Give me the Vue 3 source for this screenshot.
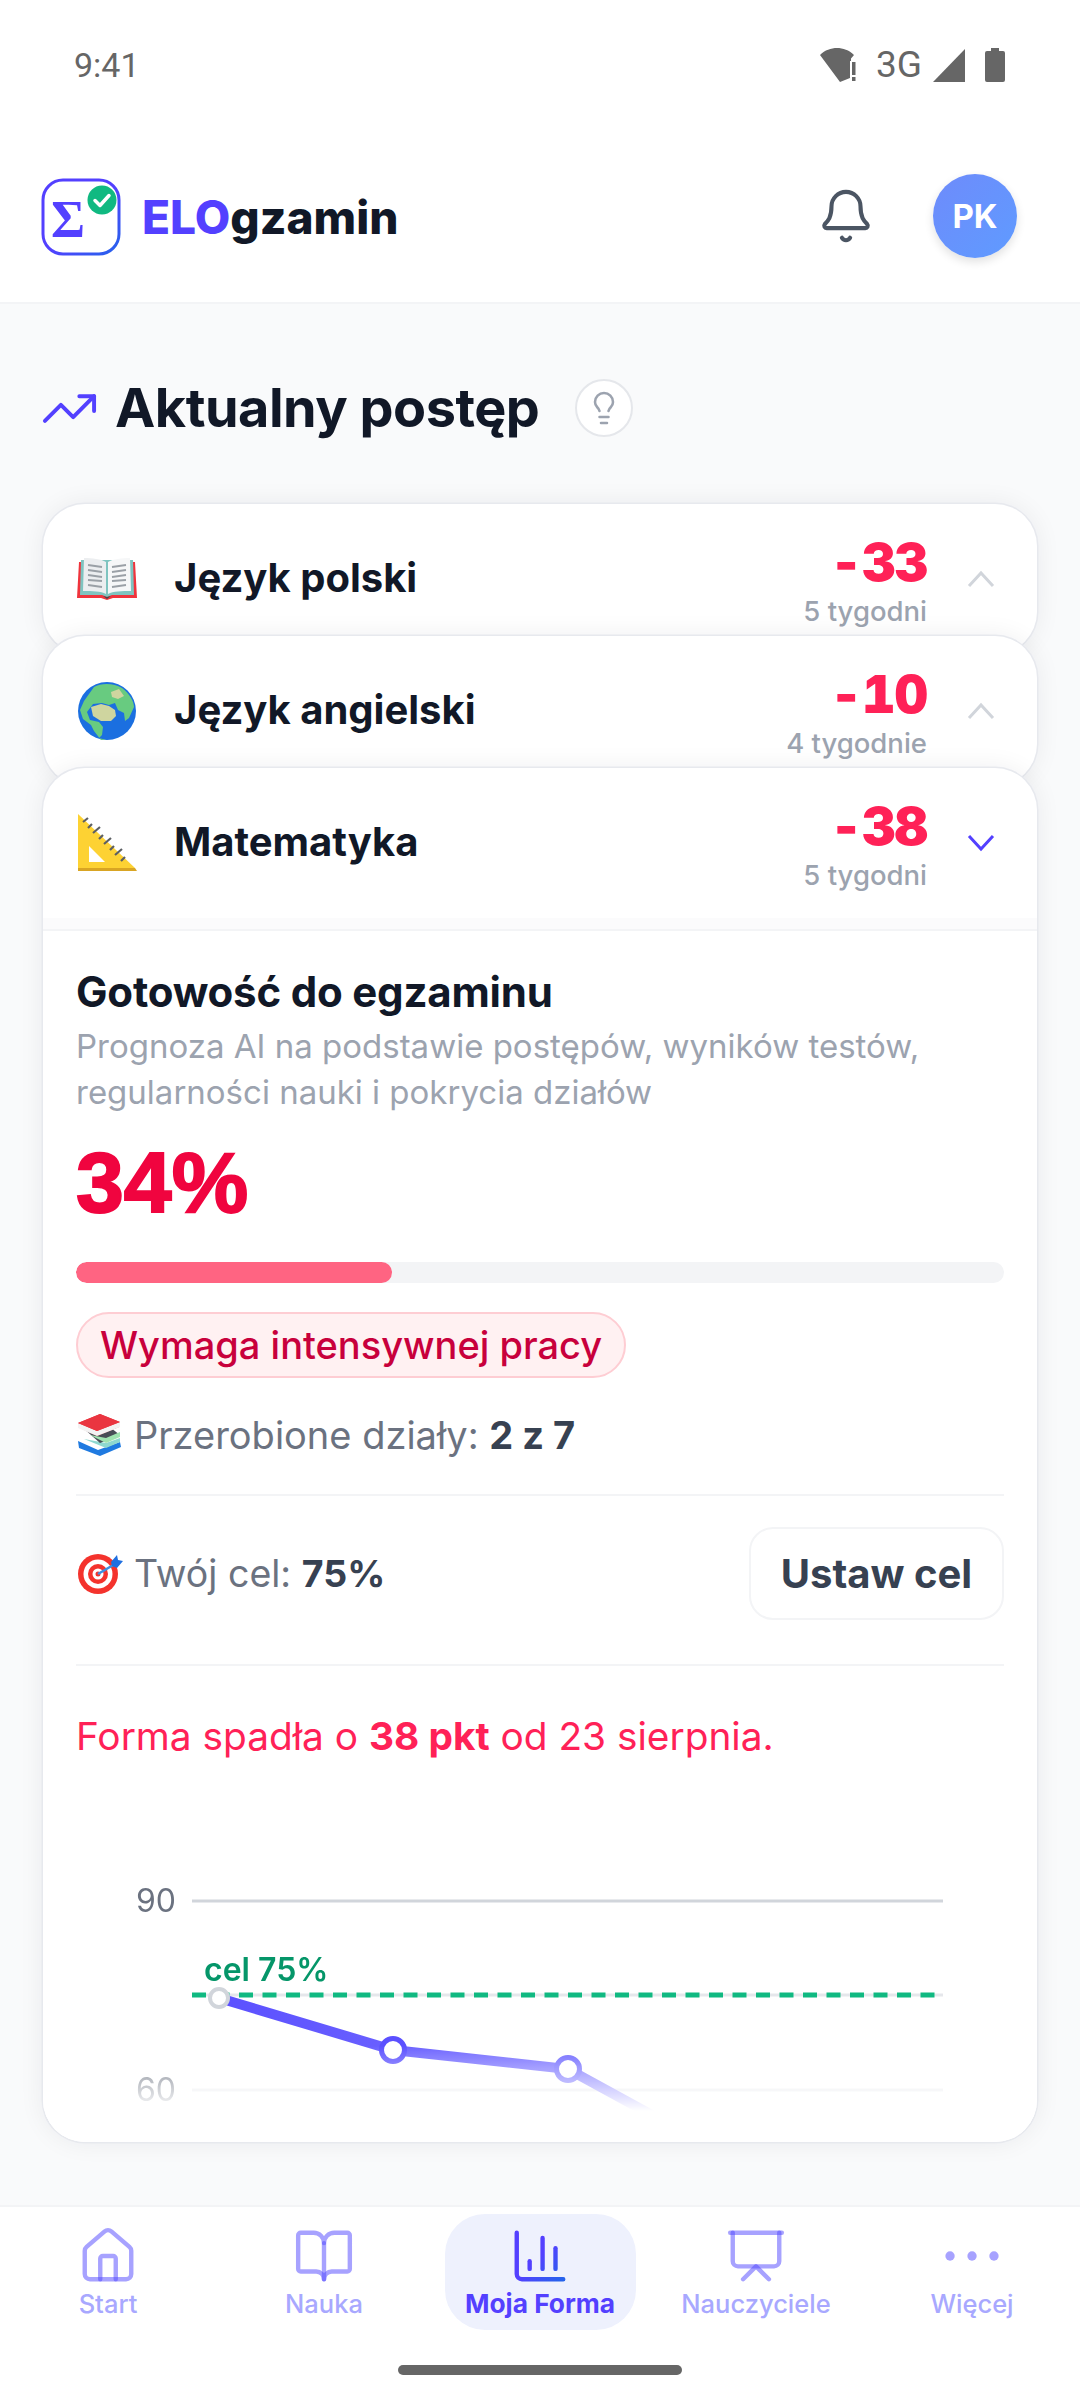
<template>
  <div class="page">
    <div class="status">
      <span class="time">9:41</span>
      <div class="status-right">
        <svg class="wifi" width="38" height="36" viewBox="0 0 38 36">
          <path d="M0 8C5 3 11 1 17 1c6 0 12 2 17 7l-3 3.500V14h-1v17L20 35z" fill="#666" />
          <rect x="32" y="15" width="3.500" height="13" fill="#666" />
          <rect x="32" y="30" width="3.500" height="4" fill="#666" />
        </svg>
        <span class="net">3G</span>
        <svg class="signal" width="32" height="33" viewBox="0 0 32 33"><path d="M32 0v33H0z" fill="#666" /></svg>
        <svg class="battery" width="20" height="34" viewBox="0 0 20 34">
          <path d="M6 0h8v3h4a2 2 0 0 1 2 2v27a2 2 0 0 1-2 2H2a2 2 0 0 1-2-2V5a2 2 0 0 1 2-2h4z" fill="#666" />
        </svg>
      </div>
    </div>

    <header class="top">
      <div class="brand">
        <svg class="logo" width="80" height="78" viewBox="0 0 80 78">
          <defs>
            <linearGradient id="logoBorder" x1="0" y1="0" x2="1" y2="1">
              <stop offset="0.5" stop-color="#5340ff" />
              <stop offset="1" stop-color="#2563eb" />
            </linearGradient>
          </defs>
          <rect x="2" y="2" width="76" height="74" rx="20" fill="#fff" stroke="url(#logoBorder)" stroke-width="3" />
          <text x="27" y="59" class="sigma" text-anchor="middle">Σ</text>
          <circle cx="61" cy="22" r="14.500" fill="#10b981" />
          <path d="M54 22.500l5 5 9-10" fill="none" stroke="#fff" stroke-width="3.500" stroke-linecap="round" stroke-linejoin="round" />
        </svg>
        <span class="brand-name"><span class="elo">ELO</span>gzamin</span>
      </div>
      <div class="top-right">
        <svg class="bell" width="58" height="58" viewBox="0 0 24 24" fill="none" stroke="#4b5563" stroke-width="1.700" stroke-linecap="round" stroke-linejoin="round">
          <path d="M10.300 21a1.940 1.940 0 0 0 3.400 0" />
          <path d="M3.260 15.330A1 1 0 0 0 4 17h16a1 1 0 0 0 .74-1.670C19.410 13.960 18 12.500 18 8A6 6 0 0 0 6 8c0 4.500-1.410 5.960-2.740 7.330" />
        </svg>
        <div class="avatar">PK</div>
      </div>
    </header>

    <main class="main">
      <div class="heading">
        <svg class="trend" width="59" height="59" viewBox="0 0 24 24" fill="none" stroke="#5340ff" stroke-width="1.600" stroke-linecap="round" stroke-linejoin="round">
          <polyline points="22 7 13.500 15.500 8.500 10.500 2 17" />
          <polyline points="16 7 22 7 22 13" />
        </svg>
        <h1>Aktualny postęp</h1>
        <div class="tip">
          <svg width="36" height="36" viewBox="0 0 24 24" fill="none" stroke="#9ca3af" stroke-width="1.700" stroke-linecap="round" stroke-linejoin="round">
            <path d="M15 14c.2-1 .7-1.700 1.500-2.500 1-.9 1.500-2.200 1.500-3.500A6 6 0 0 0 6 8c0 1 .2 2.200 1.500 3.500.7.700 1.300 1.500 1.500 2.500" />
            <path d="M9 18h6" />
            <path d="M10 22h4" />
          </svg>
        </div>
      </div>

      <div class="stack">
        <section class="card">
          <div class="card-head">
            <svg class="emoji" width="60" height="42" viewBox="0 0 60 42">
              <path d="M2 4h56l2 36H36l-6 2-6-2H0z" fill="#f0343c" />
              <path d="M4 2h52l1 35H35l-5 2-5-2H3z" fill="#7fc4c0" />
              <path d="M7 0c8 0 17 1 22 4v32c-5-3-14-3-23-3z" fill="#eceef0" />
              <path d="M53 0c-8 0-17 1-22 4v32c5-3 14-3 23-3z" fill="#f6f7f8" />
              <path d="M11 7l14 2M11 12l14 2M11 17l14 2M11 22l14 1M11 27l14 2M35 9l14-2M35 14l14-2M35 19l14-2M35 23l14-1M35 29l14-2" stroke="#9aa0a6" stroke-width="1.800" />
              <path d="M26 38l4 3 4-3-4 1z" fill="#44474c" />
            </svg>
            <span class="subject">Język polski</span>
            <div class="score">
              <div class="num">-33</div>
              <div class="weeks">5 tygodni</div>
            </div>
            <svg class="chev" width="30" height="18" viewBox="0 0 30 18"><path d="M3 16L15 3l12 13" fill="none" stroke="#d1d5db" stroke-width="3" /></svg>
          </div>
        </section>

        <section class="card">
          <div class="card-head">
            <svg class="emoji" width="60" height="58" viewBox="0 0 60 58">
              <circle cx="30" cy="29" r="29" fill="#1b6fe0" />
              <path d="M17 5c7-4 20-4 28 1 7 5 12 13 12 19l-5 11-4 3-1-8-6-3-3-7-6 2-7-2-9 1-6 8 3 8 9 2 4 5-1 8-3 3 7 2h-5l-7-9-3-6-8-6-3-9 4-9z" fill="#68cb80" />
              <path d="M14 25l10-3 8 2 6 4 1 6-5 5-10 0-8-5z" fill="#cfd59f" />
              <path d="M34 10l8-3 5 7-6 3-6-2z" fill="#cfd59f" />
            </svg>
            <span class="subject">Język angielski</span>
            <div class="score">
              <div class="num">-10</div>
              <div class="weeks">4 tygodnie</div>
            </div>
            <svg class="chev" width="30" height="18" viewBox="0 0 30 18"><path d="M3 16L15 3l12 13" fill="none" stroke="#d1d5db" stroke-width="3" /></svg>
          </div>
        </section>

        <section class="card open">
          <div class="card-head">
            <svg class="emoji" width="60" height="58" viewBox="0 0 60 58">
              <path d="M1 0l57 54H1z" fill="#fdd233" />
              <path d="M1 54h57l2 3H1z" fill="#d9a523" />
              <path d="M12 32l16 16H12z" fill="#fff" />
              <path d="M5 7l5-4M10 13l4-4M15 18l7-6M21 24l4-4M26 29l7-6M32 35l4-4M37 40l7-6M43 46l4-4" stroke="#5c5f63" stroke-width="2.200" transform="translate(1 1)" />
            </svg>
            <span class="subject">Matematyka</span>
            <div class="score">
              <div class="num">-38</div>
              <div class="weeks">5 tygodni</div>
            </div>
            <svg class="chev" width="30" height="18" viewBox="0 0 30 18"><path d="M3 2l12 13L27 2" fill="none" stroke="#5340ff" stroke-width="3" /></svg>
          </div>

          <div class="card-body">
            <div class="inner">
              <h2>Gotowość do egzaminu</h2>
              <p class="desc">Prognoza AI na podstawie postępów, wyników testów, regularności nauki i pokrycia działów</p>
              <div class="pct">34%</div>
              <div class="bar"><div class="bar-fill" :style="{ width: readiness + '%' }"></div></div>
              <div class="badge">Wymaga intensywnej pracy</div>

              <div class="done">
                <svg class="mini" width="46" height="44" viewBox="0 0 46 44">
                  <path d="M2 28l20 9 22-8 1 5-21 9L3 35z" fill="#1f7ae0" />
                  <path d="M8 26l22 9 14-6v-4l-14 5z" fill="#8ed8cf" />
                  <path d="M6 14l18 16 20-8-18-14z" fill="#484d56" />
                  <path d="M14 22l16 8 14-6v-5l-14 6z" fill="#9fe3b0" />
                  <path d="M2 10L24 1l20 8-1 5-22 9L2 14z" fill="#e8343c" />
                  <path d="M2 10l19 8 23-9v5l-23 9-19-8z" fill="#f3f3f3" />
                  <path d="M2 10L24 1l20 8-23 9z" fill="#ea3540" />
                </svg>
                <span>Przerobione działy: <b>2 z 7</b></span>
              </div>

              <div class="goal">
                <div class="goal-text">
                  <svg class="mini target" width="46" height="42" viewBox="0 0 46 42">
                    <circle cx="21" cy="21" r="20" fill="#f4332d" />
                    <circle cx="21" cy="21" r="14.500" fill="#fff" />
                    <circle cx="21" cy="21" r="10" fill="#f4332d" />
                    <circle cx="21" cy="21" r="5.500" fill="#fff" />
                    <circle cx="21" cy="21" r="2.500" fill="#f4332d" />
                    <path d="M21 21l17-10" stroke="#3d8fe0" stroke-width="2.500" />
                    <path d="M34 9l6-7 1 5 5 1-6 7-5-2z" fill="#1f6fe0" />
                  </svg>
                  <span>Twój cel: <b>75%</b></span>
                </div>
                <button class="goal-btn">Ustaw cel</button>
              </div>

              <p class="drop">Forma spadła o <b>38 pkt</b> od 23 sierpnia.</p>

              <svg class="chart" width="928" height="310" viewBox="76 1800 928 310">
                <defs>
                  <linearGradient id="lineGrad" gradientUnits="userSpaceOnUse" x1="219" y1="0" x2="650" y2="0">
                    <stop offset="0" stop-color="#5b50ff" />
                    <stop offset="1" stop-color="#7f78ff" />
                  </linearGradient>
                </defs>
                <text x="176" y="1911" class="tick" text-anchor="end">90</text>
                <line x1="192" y1="1900" x2="943" y2="1900" stroke="#d1d5db" stroke-width="3" />
                <text x="176" y="2100" class="tick" text-anchor="end">60</text>
                <line x1="192" y1="2089" x2="943" y2="2089" stroke="#e5e7eb" stroke-width="3" />
                <text x="204" y="1980" class="goal-label">cel 75%</text>
                <line x1="192" y1="1994" x2="943" y2="1994" stroke="#e5e7eb" stroke-width="3" />
                <line x1="192" y1="1994" x2="943" y2="1994" stroke="#10b981" stroke-width="5" stroke-dasharray="14 9.500" />
                <polyline points="219,1997 393,2049 568,2068 681,2130" fill="none" stroke="url(#lineGrad)" stroke-width="10" />
                <circle cx="219" cy="1997" r="9" fill="#fff" stroke="#d1d5db" stroke-width="4" />
                <circle cx="393" cy="2049" r="11.500" fill="#fff" stroke="#5b50ff" stroke-width="5" />
                <circle cx="568" cy="2068" r="11.500" fill="#fff" stroke="#6f68ff" stroke-width="5" />
              </svg>
            </div>
          </div>
        </section>
      </div>
    </main>

    <nav class="nav">
      <div v-for="item in navItems" :key="item.label" class="nav-item" :class="{ active: item.active }">
        <svg width="62" height="62" viewBox="0 0 24 24" fill="none" :stroke="item.active ? 'url(#activeIcon)' : 'rgba(79, 70, 255, 0.5)'" :stroke-width="item.dots ? 3.600 : 1.700" stroke-linecap="round" stroke-linejoin="round">
          <defs v-if="item.active">
            <linearGradient id="activeIcon" gradientUnits="userSpaceOnUse" x1="3" y1="3" x2="21" y2="21">
              <stop offset="0.5" stop-color="#5340ff" />
              <stop offset="1" stop-color="#2563eb" />
            </linearGradient>
          </defs>
          <path v-for="d in item.paths" :key="d" :d="d" />
        </svg>
        <span>{{ item.label }}</span>
      </div>
    </nav>
    <div class="home-line"></div>
  </div>
</template>

<script setup>
const readiness = 34

const navItems = [
  {
    label: 'Start',
    paths: [
      'M15 21v-8a1 1 0 0 0-1-1h-4a1 1 0 0 0-1 1v8',
      'M3 10a2 2 0 0 1 .709-1.528l7-5.999a2 2 0 0 1 2.582 0l7 5.999A2 2 0 0 1 21 10v9a2 2 0 0 1-2 2H5a2 2 0 0 1-2-2z',
    ],
  },
  {
    label: 'Nauka',
    paths: [
      'M12 7v14',
      'M3 18a1 1 0 0 1-1-1V4a1 1 0 0 1 1-1h5a4 4 0 0 1 4 4 4 4 0 0 1 4-4h5a1 1 0 0 1 1 1v13a1 1 0 0 1-1 1h-6a3 3 0 0 0-3 3 3 3 0 0 0-3-3z',
    ],
  },
  {
    label: 'Moja Forma',
    active: true,
    paths: ['M3 3v16a2 2 0 0 0 2 2h16', 'M18 17V9', 'M13 17V5', 'M8 17v-3'],
  },
  {
    label: 'Nauczyciele',
    paths: ['M2 3h20', 'M21 3v11a2 2 0 0 1-2 2H5a2 2 0 0 1-2-2V3', 'm7 21 5-5 5 5'],
  },
  {
    label: 'Więcej',
    dots: true,
    paths: ['M3.500 12h.01', 'M12 12h.01', 'M20.500 12h.01'],
  },
]
</script>

<style>
html,
body {
  margin: 0;
  background: #f9fafb;
}
</style>

<style scoped>
.page {
  width: 1080px;
  height: 2400px;
  display: flex;
  flex-direction: column;
  font-family: Inter, "Liberation Sans", sans-serif;
  color: #111827;
  background: #f9fafb;
  overflow: hidden;
}

.status {
  height: 100px;
  flex: none;
  box-sizing: border-box;
  padding: 0 75px 0 74px;
  background: #fff;
  display: flex;
  justify-content: space-between;
  align-items: flex-start;
  color: #666;
  font-family: Roboto, sans-serif;
}

.time {
  font-size: 34px;
  line-height: 40px;
  margin-top: 45px;
}

.status-right {
  display: flex;
  align-items: center;
  margin-top: 48px;
  height: 34px;
}

.net {
  font-size: 37px;
  line-height: 34px;
  margin-left: 18px;
}

.signal {
  margin-left: 11px;
}

.battery {
  margin-left: 20px;
}

.top {
  height: 204px;
  flex: none;
  box-sizing: border-box;
  background: #fff;
  border-bottom: 2px solid #f3f4f6;
  padding: 30px 63px 0 41px;
  display: flex;
  justify-content: space-between;
  align-items: center;
}

.brand {
  display: flex;
  align-items: center;
  gap: 21px;
  margin-top: 2px;
}

.sigma {
  font-family: "Liberation Serif", serif;
  font-size: 52px;
  font-weight: 700;
  fill: #5340ff;
}

.brand-name {
  font-size: 46px;
  font-weight: 800;
  color: #111827;
}

.elo {
  color: #5340ff;
}

.top-right {
  display: flex;
  align-items: center;
  gap: 58px;
}

.avatar {
  width: 84px;
  height: 84px;
  border-radius: 50%;
  background: linear-gradient(135deg, #6e8bfb, #5f9bff);
  box-shadow: 0 4px 10px rgba(0, 0, 0, 0.12);
  color: #fff;
  font-size: 33px;
  font-weight: 700;
  display: flex;
  align-items: center;
  justify-content: center;
}

.main {
  flex: 1;
  min-height: 0;
  padding: 75px 43px 0 43px;
}

.heading {
  display: flex;
  align-items: center;
  height: 58px;
}

.trend {
  margin-left: -3px;
  margin-right: 16px;
}

h1 {
  margin: 0;
  font-size: 54px;
  font-weight: 700;
  line-height: 58px;
  letter-spacing: -0.5px;
  color: #111827;
}

.tip {
  width: 54px;
  height: 54px;
  margin-left: 36px;
  border: 2px solid #e5e7eb;
  border-radius: 50%;
  background: #fff;
  display: flex;
  align-items: center;
  justify-content: center;
}

.stack {
  margin-top: 67px;
}

.card {
  position: relative;
  background: #fff;
  border-radius: 42px;
  box-shadow: 0 0 0 1.500px #e7e9ee, 0 0 26px rgba(17, 24, 39, 0.07);
}

.card + .card {
  margin-top: -18px;
}

.card-head {
  height: 150px;
  box-sizing: border-box;
  padding: 0 41px 0 34px;
  display: flex;
  align-items: center;
}

.emoji {
  flex: none;
}

.subject {
  margin: -3px 0 0 37px;
  flex: 1;
  font-size: 40px;
  font-weight: 700;
  color: #111827;
}

.score {
  text-align: right;
  margin-right: 39px;
  margin-top: 2px;
}

.num {
  font-size: 52px;
  line-height: 60px;
  font-weight: 900;
  letter-spacing: -1px;
  font-variant-numeric: tabular-nums;
  color: #ff2157;
}

.weeks {
  margin-top: 1px;
  font-size: 27.500px;
  line-height: 34px;
  font-weight: 500;
  color: #9ca3af;
}

.card-body {
  padding-top: 11px;
  background: #fbfbfc;
  border-radius: 0 0 42px 42px;
}

.inner {
  padding: 36px 33px 31px;
  border-top: 2px solid #f3f4f6;
  border-radius: 0 0 42px 42px;
  background: #fff;
}

h2 {
  margin: 0;
  font-size: 42px;
  font-weight: 700;
  line-height: 50px;
  letter-spacing: -0.2px;
  color: #111827;
}

.desc {
  margin: 7px 0 0;
  font-size: 33px;
  line-height: 45.500px;
  color: #9ca3af;
}

.pct {
  margin-top: 22px;
  font-family: "Liberation Sans", sans-serif;
  font-size: 86px;
  line-height: 90px;
  font-weight: 700;
  -webkit-text-stroke: 2px #f0043f;
  color: #f0043f;
}

.bar {
  margin-top: 35px;
  height: 21px;
  border-radius: 11px;
  background: #f3f4f6;
  overflow: hidden;
}

.bar-fill {
  height: 100%;
  border-radius: 11px;
  background: #ff6482;
}

.badge {
  margin-top: 29px;
  width: fit-content;
  box-sizing: border-box;
  height: 66px;
  line-height: 62px;
  padding: 0 22px;
  border: 2px solid #fecdd3;
  border-radius: 33px;
  background: #fff1f2;
  color: #c8003c;
  font-size: 38px;
  font-weight: 500;
}

.done {
  margin-top: 32px;
  padding-bottom: 34px;
  border-bottom: 2px solid #f3f4f6;
  display: flex;
  align-items: center;
  gap: 12px;
  height: 50px;
  font-size: 38px;
  color: #6b7280;
}

b {
  font-weight: 700;
  color: #374151;
}

.goal {
  margin-top: 31px;
  padding-bottom: 44px;
  border-bottom: 2px solid #f3f4f6;
  display: flex;
  justify-content: space-between;
  align-items: center;
}

.goal-text {
  display: flex;
  align-items: center;
  gap: 11px;
  font-size: 37.500px;
  color: #6b7280;
}

.target {
  margin-left: 1px;
}

.goal-btn {
  width: 255px;
  height: 93px;
  border: 2px solid #f3f4f6;
  border-radius: 24px;
  background: #fff;
  font-family: inherit;
  font-size: 40px;
  font-weight: 700;
  color: #374151;
}

.drop {
  margin: 45px 0 0;
  font-size: 38.800px;
  line-height: 50px;
  color: #ff2157;
}

.drop b {
  color: #ff2157;
}

.chart {
  display: block;
  margin-top: 40px;
  mask-image: linear-gradient(to bottom, #000 79%, transparent 100%);
}

.tick {
  font-size: 32px;
  fill: #6b7280;
}

.goal-label {
  font-size: 32px;
  font-weight: 600;
  fill: #059669;
}

.nav {
  height: 160px;
  flex: none;
  box-sizing: border-box;
  background: #fff;
  border-top: 2px solid #f3f4f6;
  padding: 7px 0 0;
  display: grid;
  grid-template-columns: repeat(5, 1fr);
  justify-items: center;
  align-items: start;
}

.nav-item {
  width: 191px;
  height: 116px;
  box-sizing: border-box;
  padding-top: 11px;
  border-radius: 40px;
  display: flex;
  flex-direction: column;
  align-items: center;
  font-size: 25.500px;
  font-weight: 500;
  line-height: 34px;
  color: #a8a8ff;
  white-space: nowrap;
}

.nav-item.active {
  background: #eef1fd;
  color: #5340ff;
  font-size: 26.300px;
  font-weight: 700;
}

.home-line {
  height: 35px;
  flex: none;
  background: #fff;
  position: relative;
}

.home-line::after {
  content: "";
  position: absolute;
  left: 398px;
  top: 0;
  width: 284px;
  height: 10px;
  border-radius: 5px;
  background: #666;
}
</style>
